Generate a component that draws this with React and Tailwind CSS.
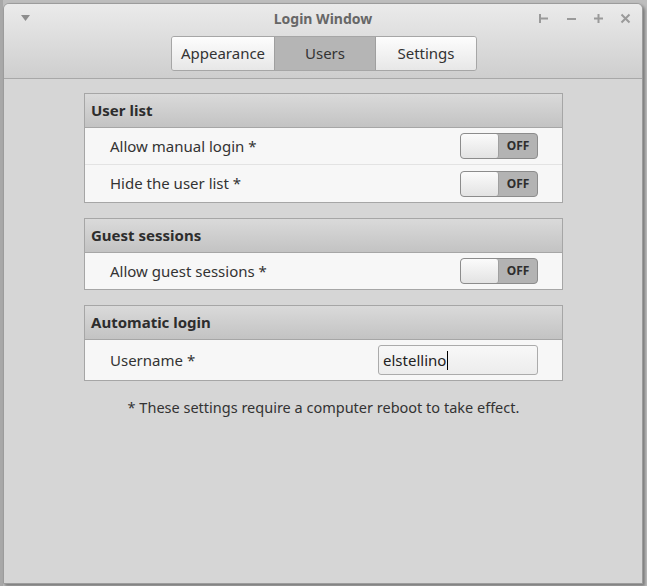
import React from "react";

const font = { fontFamily: '"Noto Sans", "Open Sans", sans-serif' };

function Switch() {
  return (
    <div className="flex h-[26px] w-[78px] overflow-hidden rounded-[4px] border border-[#8c8c8c] bg-[#b3b3b3]">
      <div className="h-full w-[38px] rounded-[3px] border-r border-[#a0a0a0] bg-gradient-to-b from-[#fbfbfb] to-[#e3e3e3]" />
      <div className="flex flex-1 items-center justify-center text-[12px] font-bold text-[#2e2e2e]">OFF</div>
    </div>
  );
}

function Frame({ title, children }) {
  return (
    <div className="border border-[#a6a6a6] bg-[#f7f7f7]">
      <div className="flex h-[34px] items-center border-b border-[#a6a6a6] bg-gradient-to-b from-[#dadada] to-[#c3c3c3] pl-[6px] text-[15px] font-bold text-[#2d2d2d]">
        {title}
      </div>
      {children}
    </div>
  );
}

function Row({ label, children, className }) {
  return (
    <div className={"flex items-center justify-between pl-[25px] pr-[24px] text-[15px] text-[#333] " + className}>
      <span>{label}</span>
      {children}
    </div>
  );
}

export default function App() {
  return (
    <div className="relative h-[586px] w-[647px] overflow-hidden bg-[#bdbdbd]" style={font}>
      <div className="absolute left-0 top-0 h-[586px] w-[3px] bg-[#a8a8a8]" />
      <div className="absolute left-[3px] top-[3px] flex h-[581px] w-[640px] flex-col overflow-hidden rounded-t-[6px] border border-[#9c9c9c] bg-[#d6d6d6] shadow-[2px_2px_3px_rgba(0,0,0,0.35)]">
        <div className="relative h-[75px] shrink-0 border-b border-[#a8a8a8] bg-gradient-to-b from-[#ebebeb] to-[#cecece]">
          <svg className="absolute left-[17px] top-[11px]" width="9" height="7" viewBox="0 0 9 7">
            <path d="M0 0 L9 0 L4.5 6 Z" fill="#8d8d8d" />
          </svg>
          <div className="absolute left-0 right-0 top-[4px] text-center text-[14px] font-bold text-[#676767]">Login Window</div>
          <div className="absolute right-[10px] top-[8px] flex items-center gap-[14px]">
            <svg width="13" height="13" viewBox="0 0 13 13">
              <path d="M2 2 V11 M2 6.5 H10" stroke="#9a9a9a" strokeWidth="2" fill="none" />
            </svg>
            <svg width="13" height="13" viewBox="0 0 13 13">
              <path d="M2 7 H11" stroke="#9a9a9a" strokeWidth="2" fill="none" />
            </svg>
            <svg width="13" height="13" viewBox="0 0 13 13">
              <path d="M2 6.5 H11 M6.5 2 V11" stroke="#9a9a9a" strokeWidth="2" fill="none" />
            </svg>
            <svg width="13" height="13" viewBox="0 0 13 13">
              <path d="M2.5 2.5 L10.5 10.5 M10.5 2.5 L2.5 10.5" stroke="#9a9a9a" strokeWidth="2" fill="none" />
            </svg>
          </div>
          <div className="absolute left-[167px] top-[32px] flex h-[35px] overflow-hidden rounded-[3px] border border-[#a6a6a6] text-[15px] text-[#333]">
            <div className="flex w-[102px] items-center justify-center bg-gradient-to-b from-[#fdfdfd] to-[#e7e7e7]">Appearance</div>
            <div className="flex w-[102px] items-center justify-center border-x border-[#9f9f9f] bg-[#b5b5b5]">Users</div>
            <div className="flex w-[100px] items-center justify-center bg-gradient-to-b from-[#fdfdfd] to-[#e7e7e7]">Settings</div>
          </div>
        </div>
        <div className="flex flex-col gap-[15px] pl-[80px] pr-[79px] pt-[14px]">
          <Frame title="User list">
            <Row label="Allow manual login *" className="h-[37px] border-b border-[#e3e3e3]"><Switch /></Row>
            <Row label="Hide the user list *" className="h-[37px]"><Switch /></Row>
          </Frame>
          <Frame title="Guest sessions">
            <Row label="Allow guest sessions *" className="h-[36px]"><Switch /></Row>
          </Frame>
          <Frame title="Automatic login">
            <Row label="Username *" className="h-[40px]">
              <div className="flex h-[30px] w-[160px] items-center rounded-[3px] border border-[#ababab] bg-gradient-to-b from-[#f8f8f8] to-[#ececec] pl-[4px] text-[15px] text-[#222]">
                elstellino
                <span className="ml-[1px] inline-block h-[19px] w-[1px] bg-black" />
              </div>
            </Row>
          </Frame>
          <div className="mt-[1px] text-center text-[14.5px] text-[#333]">* These settings require a computer reboot to take effect.</div>
        </div>
      </div>
    </div>
  );
}
